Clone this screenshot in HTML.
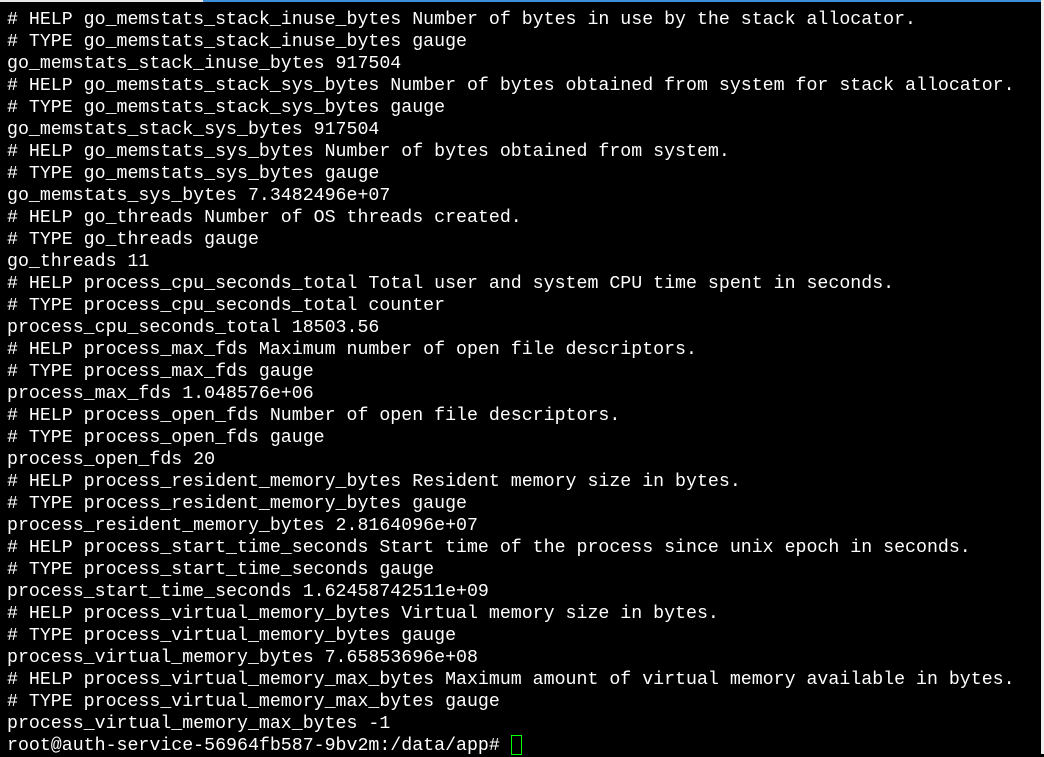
<!DOCTYPE html>
<html><head><meta charset="utf-8"><style>
html,body{margin:0;padding:0;background:#000;width:1044px;height:754px;overflow:hidden}
pre{margin:0;position:absolute;left:7px;top:9px;font-family:"Liberation Mono",monospace;font-size:18.25px;line-height:22px;color:#fff}
.cur{display:inline-block;width:9px;height:18px;border:1px solid #0f0;vertical-align:-5px}
.r{position:absolute;right:0;top:0;width:3px;height:754px;background:#f0f0f0}
.t{position:absolute;left:203px;top:0;width:841px;height:2px;background:#3c8fd8}
.t2{position:absolute;left:0;top:0;width:203px;height:2px;background:#e8e8e8}
</style></head><body><div class="t"></div><div class="t2"></div><div class="r"></div><pre># HELP go_memstats_stack_inuse_bytes Number of bytes in use by the stack allocator.
# TYPE go_memstats_stack_inuse_bytes gauge
go_memstats_stack_inuse_bytes 917504
# HELP go_memstats_stack_sys_bytes Number of bytes obtained from system for stack allocator.
# TYPE go_memstats_stack_sys_bytes gauge
go_memstats_stack_sys_bytes 917504
# HELP go_memstats_sys_bytes Number of bytes obtained from system.
# TYPE go_memstats_sys_bytes gauge
go_memstats_sys_bytes 7.3482496e+07
# HELP go_threads Number of OS threads created.
# TYPE go_threads gauge
go_threads 11
# HELP process_cpu_seconds_total Total user and system CPU time spent in seconds.
# TYPE process_cpu_seconds_total counter
process_cpu_seconds_total 18503.56
# HELP process_max_fds Maximum number of open file descriptors.
# TYPE process_max_fds gauge
process_max_fds 1.048576e+06
# HELP process_open_fds Number of open file descriptors.
# TYPE process_open_fds gauge
process_open_fds 20
# HELP process_resident_memory_bytes Resident memory size in bytes.
# TYPE process_resident_memory_bytes gauge
process_resident_memory_bytes 2.8164096e+07
# HELP process_start_time_seconds Start time of the process since unix epoch in seconds.
# TYPE process_start_time_seconds gauge
process_start_time_seconds 1.62458742511e+09
# HELP process_virtual_memory_bytes Virtual memory size in bytes.
# TYPE process_virtual_memory_bytes gauge
process_virtual_memory_bytes 7.65853696e+08
# HELP process_virtual_memory_max_bytes Maximum amount of virtual memory available in bytes.
# TYPE process_virtual_memory_max_bytes gauge
process_virtual_memory_max_bytes -1
root@auth-service-56964fb587-9bv2m:/data/app# <span class="cur"></span></pre></body></html>
